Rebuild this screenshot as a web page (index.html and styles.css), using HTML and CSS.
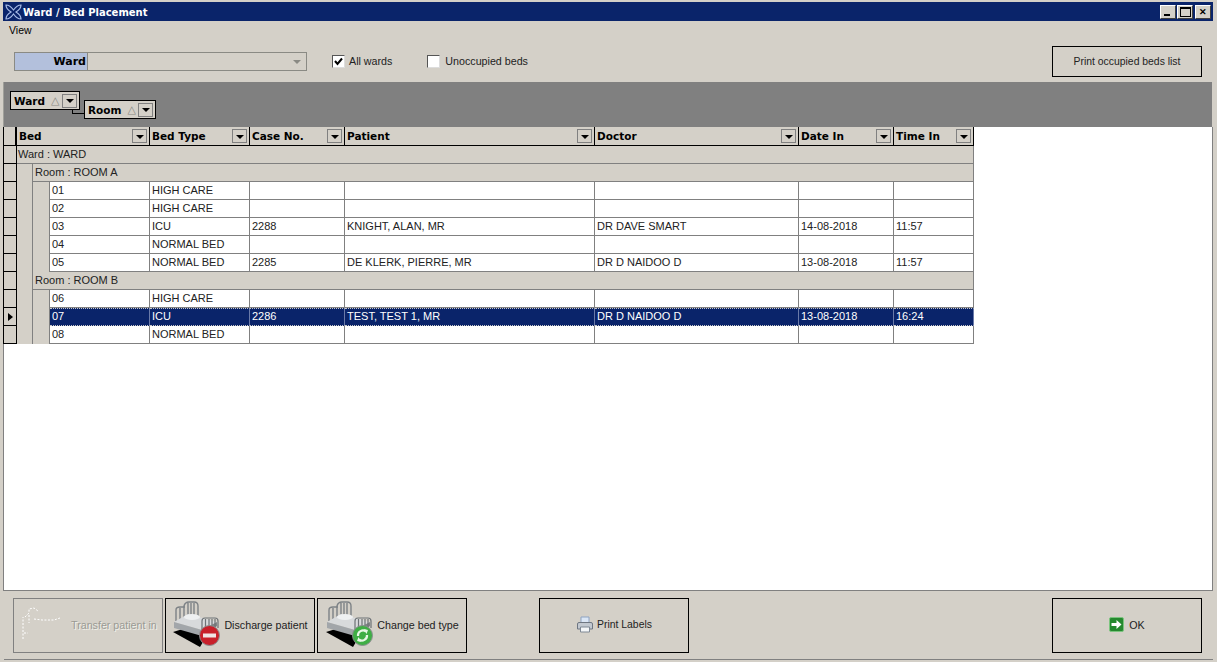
FILE: index.html
```html
<!DOCTYPE html>
<html lang="en">
<head>
    <meta charset="UTF-8">
    <title>Ward / Bed Placement</title>
    <link rel="stylesheet" href="styles.css">
</head>
<body>

<svg class="defs" width="0" height="0">
    <symbol id="bed" viewBox="0 0 48 48">
        <path d="M1 31 L14 27 L34 36 L28 46 Z" fill="#000"/>
        <path d="M4 20 V9 Q4 6 8 6 H13 M8 18 V7 M12 16 V5 Q13 1 17 1 H22 Q26 1 26 5 V16 M16 15 V2 M19 15 V2 M22 15 V2" fill="none" stroke="#7d8286" stroke-width="1.4"/>
        <path d="M2 21 L16 13 L45 21 L30 29 Z" fill="#d8dadc"/>
        <path d="M2 21 L30 29 L30 35 L2 27 Z" fill="#a2a6aa"/>
        <path d="M30 29 L45 21 L45 25 L30 35 Z" fill="#7f8386"/>
        <ellipse cx="20" cy="16" rx="8" ry="3" fill="#eef0f1"/>
        <path d="M30 33 V20 Q30 17 33 17 H43 Q46 17 46 20 V27 M33.5 31 V18 M37 29 V18 M40 28 V18 M43 26 V18" fill="none" stroke="#6d7276" stroke-width="1.2"/>
    </symbol>
</svg>

<div class="titlebar">
    <svg class="app-icon" width="19" height="18" viewBox="0 0 19 18">
        <path d="M2 2 Q6 2 9.5 7 Q13 2 17 2 Q17 6 12 9 Q17 12 17 16 Q13 16 9.5 11 Q6 16 2 16 Q2 12 7 9 Q2 6 2 2 Z" fill="#0a246a" stroke="#a9bde8" stroke-width="1.2"/>
    </svg>
    <span class="title">Ward / Bed Placement</span>
    <div class="win-buttons">
        <div class="win-btn"><span class="glyph-min"></span></div>
        <div class="win-btn"><span class="glyph-max"></span></div>
        <div class="win-btn close">&#10005;</div>
    </div>
</div>

<div class="menu">View</div>

<div class="toolbar">
    <div class="combo">
        <div class="combo-label">Ward</div>
        <div class="combo-field"><span class="combo-arrow"></span></div>
    </div>
    <label class="check first">
        <span class="box">
            <svg width="9" height="9" viewBox="0 0 9 9"><path d="M1 4 L3.5 7 L8 1.5" fill="none" stroke="#000" stroke-width="2"/></svg>
        </span>All wards
    </label>
    <label class="check"><span class="box"></span>Unoccupied beds</label>
    <div class="btn print-list">Print occupied beds list</div>
</div>

<div class="group-panel">
    <div class="chip">Ward <span class="sort">&#9651;</span><span class="drop"></span></div>
    <div class="chip room">Room <span class="sort">&#9651;</span><span class="drop"></span></div>
</div>

<div class="grid-area">
    <div class="row head">
        <div class="ind"></div>
        <div class="hd bed-col">Bed<span class="drop"></span></div>
        <div class="hd">Bed Type<span class="drop"></span></div>
        <div class="hd">Case No.<span class="drop"></span></div>
        <div class="hd">Patient<span class="drop"></span></div>
        <div class="hd">Doctor<span class="drop"></span></div>
        <div class="hd">Date In<span class="drop"></span></div>
        <div class="hd">Time In<span class="drop"></span></div>
    </div>

    <div class="row group"><div class="ind"></div><div class="group-text ward">Ward : WARD</div></div>
    <div class="row group"><div class="ind"></div><div class="indent-room"></div><div class="group-text room-text">Room : ROOM A</div></div>

    <div class="row data"><div class="ind"></div><div class="indent"></div><div>01</div><div>HIGH CARE</div><div></div><div></div><div></div><div></div><div></div></div>
    <div class="row data"><div class="ind"></div><div class="indent"></div><div>02</div><div>HIGH CARE</div><div></div><div></div><div></div><div></div><div></div></div>
    <div class="row data"><div class="ind"></div><div class="indent"></div><div>03</div><div>ICU</div><div>2288</div><div>KNIGHT, ALAN, MR</div><div>DR DAVE SMART</div><div>14-08-2018</div><div>11:57</div></div>
    <div class="row data"><div class="ind"></div><div class="indent"></div><div>04</div><div>NORMAL BED</div><div></div><div></div><div></div><div></div><div></div></div>
    <div class="row data"><div class="ind"></div><div class="indent"></div><div>05</div><div>NORMAL BED</div><div>2285</div><div>DE KLERK, PIERRE, MR</div><div>DR D NAIDOO D</div><div>13-08-2018</div><div>11:57</div></div>

    <div class="row group"><div class="ind"></div><div class="indent-room"></div><div class="group-text room-text">Room : ROOM B</div></div>

    <div class="row data"><div class="ind"></div><div class="indent"></div><div>06</div><div>HIGH CARE</div><div></div><div></div><div></div><div></div><div></div></div>
    <div class="row data selected"><div class="ind"><span class="pointer"></span></div><div class="indent"></div><div>07</div><div>ICU</div><div>2286</div><div>TEST, TEST 1, MR</div><div>DR D NAIDOO D</div><div>13-08-2018</div><div>16:24</div></div>
    <div class="row data"><div class="ind"></div><div class="indent"></div><div>08</div><div>NORMAL BED</div><div></div><div></div><div></div><div></div><div></div></div>
</div>

<div class="footer">
    <div class="btn wide disabled">
        <svg width="46" height="44" viewBox="0 0 46 44">
            <path d="M3 36 V14 M5 14 L9 10 V6 L14 5 L18 8 M9 12 V20 M4 30 H8 M14 16 L22 17 L34 17 L40 15" fill="none" stroke="#fff" stroke-width="1" stroke-dasharray="2 1.5"/>
        </svg>
        <span>Transfer patient in</span>
    </div>
    <div class="btn wide">
        <span class="bed-icon">
            <svg width="48" height="48"><use href="#bed"/></svg>
            <svg class="badge" width="21" height="21" viewBox="0 0 21 21">
                <circle cx="10.5" cy="10.5" r="10" fill="#c8202a" stroke="#8b8f90"/>
                <rect x="4" y="8.5" width="13" height="4" fill="#f0e4e4"/>
            </svg>
        </span>
        <span>Discharge patient</span>
    </div>
    <div class="btn wide">
        <span class="bed-icon">
            <svg width="48" height="48"><use href="#bed"/></svg>
            <svg class="badge" width="21" height="21" viewBox="0 0 21 21">
                <circle cx="10.5" cy="10.5" r="10" fill="#3fae45" stroke="#8b8f90"/>
                <path d="M6 11 A5 5 0 0 1 14 6.5 M15 10 A5 5 0 0 1 7 14.5" fill="none" stroke="#e8f7e6" stroke-width="2.2"/>
                <path d="M12 4 L16 5 L14.5 9 Z M9 17 L5 16 L6.5 12 Z" fill="#e8f7e6"/>
            </svg>
        </span>
        <span>Change bed type</span>
    </div>
    <div class="btn wide labels">
        <svg width="18" height="17" viewBox="0 0 18 17">
            <path d="M5 1 H13 V7 H5 Z" fill="#dbe6f5" stroke="#8ea3c2"/>
            <path d="M1.5 8 Q1.5 6.5 3 6.5 H15 Q16.5 6.5 16.5 8 V13 H1.5 Z" fill="#c2c8d0" stroke="#6e7682"/>
            <path d="M4.5 11 H13.5 V16 H4.5 Z" fill="#f4f6f8" stroke="#7f8894"/>
        </svg>
        <span>Print Labels</span>
    </div>
    <div class="btn wide ok">
        <svg width="15" height="15" viewBox="0 0 15 15">
            <rect x="0.5" y="0.5" width="14" height="14" rx="1.5" fill="#25892f" stroke="#7cc47f"/>
            <path d="M2.5 6 H7.5 V3 L12.5 7.5 L7.5 12 V9 H2.5 Z" fill="#fff"/>
        </svg>
        <span>OK</span>
    </div>
</div>

</body>
</html>
```

FILE: styles.css
```css
html, body {
    margin: 0;
    padding: 0;
    height: 662px;
    overflow: hidden;
}
body {
    background-color: #d4d0c8;
    font-family: "Liberation Sans", Arial, sans-serif;
    font-size: 11px;
    color: #000;
    display: flex;
    flex-direction: column;
    padding-top: 2px;
    box-sizing: border-box;
}
.defs {
    position: absolute;
}

/* title bar */
.titlebar {
    height: 19px;
    margin: 0 4px 0 3px;
    background-color: #0a246a;
    display: flex;
    align-items: center;
    color: white;
    flex-shrink: 0;
}
.app-icon {
    margin-left: 1px;
}
.title {
    font-family: "DejaVu Sans", Verdana, sans-serif;
    font-weight: bold;
    font-size: 10px;
    padding-top: 1px;
}
.win-buttons {
    margin-left: auto;
    margin-right: 2px;
    display: flex;
}
.win-btn {
    width: 16px;
    height: 14px;
    margin-left: 1px;
    background-color: #d4d0c8;
    border: 1px solid;
    border-color: #fff #404040 #404040 #fff;
    box-sizing: border-box;
    color: #000;
    display: flex;
    align-items: center;
    justify-content: center;
}
.win-btn.close {
    margin-left: 2px;
    font-size: 9px;
    font-weight: bold;
}
.glyph-min {
    width: 6px;
    height: 2px;
    background: #000;
    margin-top: 6px;
    margin-right: 2px;
}
.glyph-max {
    width: 9px;
    height: 7px;
    border: 1px solid #000;
    border-top-width: 2px;
}

.menu {
    height: 19px;
    line-height: 19px;
    padding-left: 9px;
    font-size: 10.5px;
    flex-shrink: 0;
}

/* filter strip */
.toolbar {
    height: 42px;
    display: flex;
    align-items: center;
    padding: 0 15px 0 14px;
    flex-shrink: 0;
}
.combo {
    width: 293px;
    height: 19px;
    border: 1px solid #8a8a84;
    box-sizing: border-box;
    display: flex;
}
.combo-label {
    width: 71px;
    background-color: #b3c0dc;
    font-family: "DejaVu Sans", Verdana, sans-serif;
    font-weight: bold;
    font-size: 11px;
    line-height: 17px;
    text-align: right;
    border-right: 1px solid #8a8a84;
    padding-right: 1px;
}
.combo-field {
    flex: 1;
    display: flex;
    align-items: center;
    justify-content: flex-end;
    padding-right: 5px;
}
.combo-arrow {
    border-left: 4px solid transparent;
    border-right: 4px solid transparent;
    border-top: 4px solid #8a8a84;
    margin-top: 1px;
}
.check {
    display: flex;
    align-items: center;
    margin-left: 35px;
    color: #222;
    font-size: 10.7px;
}
.check.first {
    margin-left: 25px;
}
.box {
    width: 13px;
    height: 13px;
    box-sizing: border-box;
    background: white;
    border: 1px solid;
    border-color: #555 #ddd #ddd #555;
    margin-right: 5px;
    display: flex;
    align-items: center;
    justify-content: center;
}
.check.first .box {
    margin-right: 4px;
}
.btn {
    border: 1px solid #000;
    box-sizing: border-box;
    display: flex;
    align-items: center;
    justify-content: center;
    color: #222;
    white-space: nowrap;
}
.print-list {
    margin-left: auto;
    width: 150px;
    height: 31px;
    font-size: 10.4px;
}

/* group by panel */
.group-panel {
    height: 45px;
    margin: 0 5px 0 4px;
    background-color: #808080;
    display: flex;
    align-items: flex-start;
    padding: 9px 0 0 6px;
    box-sizing: border-box;
    flex-shrink: 0;
    box-shadow: -1px 0 0 #a0a09a;
}
.chip {
    height: 19px;
    box-sizing: border-box;
    background-color: #d4d0c8;
    border: 1px solid #000;
    font-family: "DejaVu Sans", Verdana, sans-serif;
    font-weight: bold;
    font-size: 10.5px;
    display: flex;
    align-items: center;
    padding-left: 3px;
    width: 70px;
}
.chip.room {
    width: 72px;
    margin: 9px 0 0 4px;
    position: relative;
}
.chip.room::before {
    content: "";
    position: absolute;
    left: -13px;
    top: 8px;
    width: 12px;
    height: 5px;
    border-left: 1px solid #000;
    border-bottom: 1px solid #000;
    box-sizing: border-box;
}
.sort {
    font-size: 11px;
    font-weight: normal;
    color: #8a8a84;
    margin-left: 6px;
}
.drop {
    width: 15px;
    height: 14px;
    box-sizing: border-box;
    border: 1px solid #808080;
    margin-left: auto;
    margin-right: 2px;
    display: flex;
    align-items: center;
    justify-content: center;
    flex-shrink: 0;
}
.drop::after {
    content: "";
    border-left: 4px solid transparent;
    border-right: 4px solid transparent;
    border-top: 4px solid #000;
    margin-top: 1px;
}

/* grid */
.grid-area {
    flex: 1;
    margin: 0 5px 0 4px;
    background-color: white;
    border-bottom: 1px solid #808080;
    box-shadow: -1px 0 0 #808080, 1px 0 0 #808080;
    min-height: 0;
}
.row {
    display: grid;
    grid-template-columns: 13px 33px 100px 100px 95px 250px 204px 95px 80px;
    height: 18px;
    width: 970px;
    box-sizing: border-box;
}
.ind {
    background-color: #d4d0c8;
    border-bottom: 1px solid #000;
    border-right: 1px solid #000;
    box-shadow: -1px 0 0 #000;
    box-sizing: border-box;
    display: flex;
    align-items: center;
    justify-content: center;
}
.row.head {
    height: 19px;
    background-color: #d4d0c8;
}
.head .ind {
    border-right-width: 2px;
}
.hd {
    border-bottom: 1px solid #000;
    border-right: 1px solid #000;
    font-family: "DejaVu Sans", Verdana, sans-serif;
    font-weight: bold;
    font-size: 10.5px;
    display: flex;
    align-items: center;
    padding-left: 2px;
    box-sizing: border-box;
}
.bed-col {
    grid-column: 2 / span 2;
}
.group {
    grid-template-columns: 13px 16px 1fr;
    background-color: #d4d0c8;
}
.group-text {
    border-bottom: 1px solid #808080;
    border-right: 1px solid #808080;
    line-height: 17px;
    font-size: 11px;
    color: #222;
    box-sizing: border-box;
}
.ward {
    grid-column: 2 / span 2;
    padding-left: 1px;
}
.indent-room {
    border-right: 1px solid #808080;
}
.room-text {
    padding-left: 2px;
}
.data > div {
    border-bottom: 1px solid #808080;
    border-right: 1px solid #808080;
    line-height: 17px;
    padding-left: 2px;
    font-size: 11px;
    color: #222;
    box-sizing: border-box;
    overflow: hidden;
    white-space: nowrap;
}
.data > div.ind {
    border-bottom: 1px solid #000;
    border-right: 1px solid #000;
    padding-left: 0;
    background-color: #d4d0c8;
    overflow: visible;
}
.data > div.indent {
    background-color: #d4d0c8;
    background-image: linear-gradient(#808080, #808080);
    background-size: 1px 100%;
    background-position: 15px 0;
    background-repeat: no-repeat;
    border-bottom: 0;
    padding: 0;
}
.selected > div:not(.ind):not(.indent) {
    background-color: #0a246a;
    color: white;
    border-top: 1px dotted #c8c8c8;
    border-bottom: 1px dotted #c8c8c8;
    border-right: 1px solid #6a7aa8;
    line-height: 15px;
}
.pointer {
    border-top: 4px solid transparent;
    border-bottom: 4px solid transparent;
    border-left: 5px solid #000;
}

/* bottom buttons */
.footer {
    height: 69px;
    margin: 0 4px 2px 4px;
    display: flex;
    align-items: flex-start;
    padding: 7px 11px 0 9px;
    box-sizing: border-box;
    flex-shrink: 0;
    border-bottom: 1px solid #808080;
}
.wide {
    width: 150px;
    height: 55px;
    margin-right: 2px;
    font-size: 10.7px;
    padding-bottom: 2px;
}
.bed-icon {
    position: relative;
    width: 48px;
    height: 48px;
    margin-right: 4px;
    flex-shrink: 0;
}
.badge {
    position: absolute;
    left: 27px;
    top: 24px;
}
.disabled {
    border-color: #808080;
    color: #9a9a94;
    justify-content: flex-start;
    padding-left: 6px;
    gap: 5px;
    text-shadow: 1px 1px 0 #f2f0ea;
}
.labels {
    margin-left: 70px;
    gap: 3px;
    font-size: 10.4px;
}
.ok {
    margin-left: auto;
    margin-right: 0;
    gap: 5px;
}
```
